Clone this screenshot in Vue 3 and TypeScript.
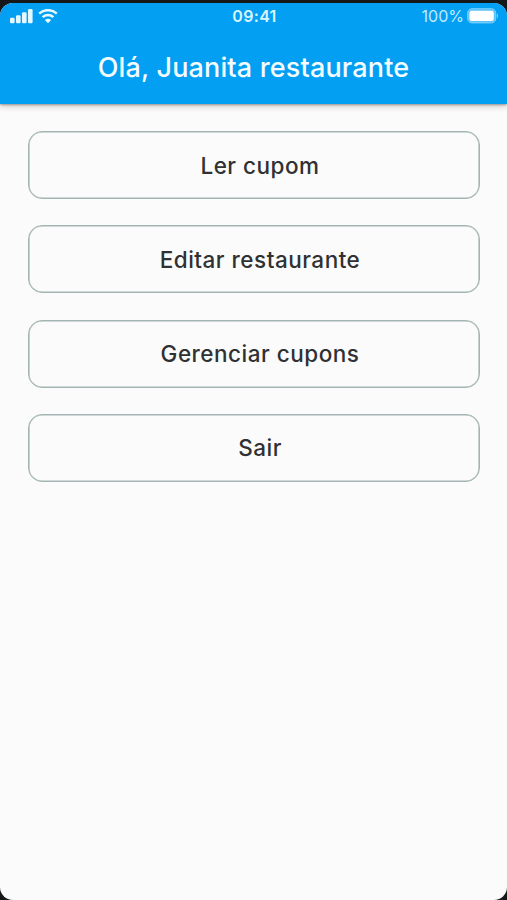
<script setup lang="ts">
interface MenuAction {
  id: string
  label: string
}

const restaurantName: string = 'Juanita restaurante'

const actions: MenuAction[] = [
  { id: 'read', label: 'Ler cupom' },
  { id: 'edit', label: 'Editar restaurante' },
  { id: 'manage', label: 'Gerenciar cupons' },
  { id: 'exit', label: 'Sair' },
]
</script>

<template>
  <div class="device">
    <div class="screen">
      <header class="app-bar">
        <div class="status">
          <div class="signals">
            <svg class="cell" width="23" height="15" viewBox="0 0 23 15" aria-hidden="true">
              <rect x="0" y="8.8" width="4.6" height="5.5" rx="1.2" />
              <rect x="6" y="6.3" width="4.6" height="8" rx="1.2" />
              <rect x="12" y="3.3" width="4.6" height="11" rx="1.2" />
              <rect x="18" y="0" width="4.6" height="14.3" rx="1.2" />
            </svg>
            <svg class="wifi" width="20" height="15" viewBox="0 0 20 15" aria-hidden="true">
              <path d="M1.2 4.6C6.1 0 13.9 0 18.8 4.6" />
              <path d="M4.6 8.1C7.7 5.3 12.3 5.3 15.4 8.1" />
              <path class="dot" d="M6.8 10.9Q10 8.4 13.2 10.9L10 14.3Z" />
            </svg>
          </div>
          <span class="time">09:41</span>
          <div class="power">
            <span class="percent">100%</span>
            <svg width="32" height="16" viewBox="0 0 32 16" aria-hidden="true">
              <rect class="shell" x="0.7" y="0.7" width="28" height="14.2" rx="4.2" />
              <rect class="charge" x="2.5" y="2.7" width="24.3" height="10.2" rx="2.2" />
              <path class="cap" d="M29.8 5.1Q32.3 7.8 29.8 10.5Z" />
            </svg>
          </div>
        </div>
        <h1 class="title">Olá, {{ restaurantName }}</h1>
      </header>
      <main class="menu">
        <button v-for="action in actions" :key="action.id" type="button" class="action">
          {{ action.label }}
        </button>
      </main>
    </div>
  </div>
</template>

<style>
body {
  background: #151719;
}
</style>

<style scoped>
.device {
  box-sizing: border-box;
  height: 900px;
  padding-top: 3px;
  background: #151719;
  font-family: Inter, Roboto, sans-serif;
}

.screen {
  height: 897px;
  overflow: hidden;
  border-radius: 13px;
  background: #fbfbfb;
}

.app-bar {
  box-sizing: border-box;
  height: 101px;
  background: #029ff3;
  box-shadow: 0 1px 2px rgba(60, 35, 35, 0.4), 0 3px 6px rgba(60, 35, 35, 0.18);
  color: #f4fcff;
}

.status {
  display: grid;
  grid-template-columns: 1fr auto 1fr;
  align-items: center;
  height: 26px;
  padding: 0 8px 0 10px;
}

.signals {
  display: flex;
  align-items: center;
  gap: 5px;
}

.cell {
  fill: #e6f8ff;
}

.wifi path {
  fill: none;
  stroke: #e6f8ff;
  stroke-width: 2.5;
}

.wifi .dot {
  fill: #e6f8ff;
  stroke: none;
}

.time {
  font-size: 16px;
  font-weight: 600;
  line-height: 26px;
  letter-spacing: 0.3px;
  color: #d9f5ff;
}

.power {
  display: flex;
  align-items: center;
  justify-content: flex-end;
  gap: 3px;
}

.percent {
  font-size: 16px;
  line-height: 26px;
  color: #c0eaff;
}

.shell {
  fill: #5bc3fa;
  stroke: #7fd0fb;
}

.charge {
  fill: #ffffff;
}

.cap {
  fill: #7fd0fb;
}

.title {
  margin: 0;
  padding-top: 22px;
  font-size: 27px;
  font-weight: 500;
  line-height: 34px;
  letter-spacing: 0.15px;
  text-align: center;
  white-space: nowrap;
}

.menu {
  display: flex;
  flex-direction: column;
  gap: 26.2px;
  padding: 27.3px 27px 0 28px;
}

.action {
  box-sizing: border-box;
  height: 68px;
  padding: 1px 0 0 12px;
  border: 1px solid #a3b5b2;
  border-radius: 14px;
  background: transparent;
  box-shadow: inset 0 0 0 0.6px #a3b5b2;
  color: #303132;
  font-family: inherit;
  font-size: 22.5px;
  font-weight: 500;
  letter-spacing: 0.5px;
  line-height: 30px;
  text-align: center;
}
</style>
